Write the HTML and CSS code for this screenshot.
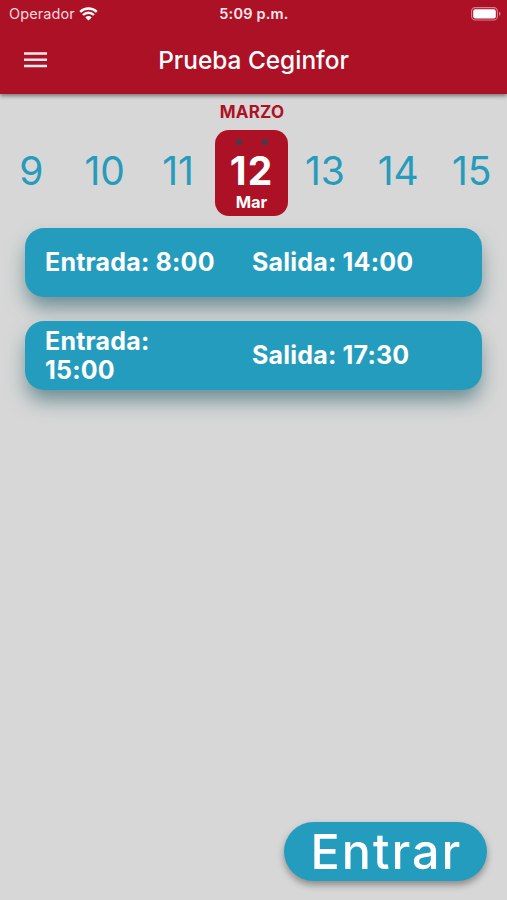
FILE: index.html
```html
<!DOCTYPE html>
<html lang="es">
<head>
    <meta charset="UTF-8">
    <meta name="viewport" content="width=device-width, initial-scale=1.0">
    <title>Prueba Ceginfor</title>
    <link rel="stylesheet" href="styles.css">
</head>
<body>
    <header class="header">
        <div class="status">
            <div class="carrier">
                <span>Operador</span>
                <svg class="wifi" width="19" height="14" viewBox="0 0 19 14">
                    <path d="M1.2 4.9a11.8 11.8 0 0 1 16.6 0M4 8a7.8 7.8 0 0 1 11 0" fill="none" stroke="#fff" stroke-width="2.4"/>
                    <path d="M9.5 13.6L6.3 10.4a4.6 4.6 0 0 1 6.4 0z" fill="#fff"/>
                </svg>
            </div>
            <div class="time">5:09 p.m.</div>
            <svg class="battery" width="30" height="14" viewBox="0 0 30 14">
                <rect x=".6" y=".6" width="25.8" height="12.4" rx="3.6" fill="none" stroke="#d9808f" stroke-width="1.1"/>
                <rect x="2.2" y="2.2" width="22.6" height="9.2" rx="2" fill="#fff"/>
                <path d="M28 4.8c2 .7 2 3.3 0 4z" fill="#d9808f"/>
            </svg>
        </div>
        <div class="toolbar">
            <button class="menu" aria-label="Menú">
                <svg width="23" height="16" viewBox="0 0 23 16">
                    <path d="M0 1.4h23M0 7.7h23M0 14h23" stroke="#fbe9ec" stroke-width="2.5"/>
                </svg>
            </button>
            <h1>Prueba Ceginfor</h1>
        </div>
    </header>
    <main>
        <div class="month">MARZO</div>
        <div class="days">
            <div class="day">9</div>
            <div class="day">10</div>
            <div class="day">11</div>
            <div class="day selected">
                <div class="rings"><i></i><i></i></div>
                <b>12</b>
                <small>Mar</small>
            </div>
            <div class="day">13</div>
            <div class="day">14</div>
            <div class="day">15</div>
        </div>
        <div class="cards">
            <div class="card">
                <div class="entry">Entrada: 8:00</div>
                <div class="exit">Salida: 14:00</div>
            </div>
            <div class="card">
                <div class="entry">Entrada: 15:00</div>
                <div class="exit">Salida: 17:30</div>
            </div>
        </div>
    </main>
    <footer class="footer">
        <button class="enter">Entrar</button>
    </footer>
</body>
</html>
```
FILE: styles.css
```css
* {
    box-sizing: border-box;
}
body {
    font-family: Inter, sans-serif;
    margin: 0;
    height: 900px;
    display: flex;
    flex-direction: column;
    overflow: hidden;
    background-color: #d7d7d7;
}
button {
    border: none;
    padding: 0;
    background: none;
    font-family: inherit;
    cursor: pointer;
}
svg {
    display: block;
}
.header {
    height: 94px;
    background-color: #ad1126;
    color: white;
    box-shadow: 0 2px 4px rgba(0, 0, 0, 0.45);
}
.status {
    display: grid;
    grid-template-columns: 1fr auto 1fr;
    align-items: center;
    height: 27px;
    padding: 0 6px 0 9px;
}
.carrier {
    display: flex;
    align-items: center;
    gap: 4px;
    font-size: 14.5px;
    letter-spacing: 0.1px;
    color: #f8d9de;
}
.time {
    margin-right: 2px;
    font-size: 14.5px;
    font-weight: 600;
    letter-spacing: 0.2px;
    color: #fbe9ec;
}
.battery {
    justify-self: end;
}
.toolbar {
    display: grid;
    grid-template-columns: 47px 1fr 47px;
    align-items: center;
    height: 66px;
}
.menu {
    padding-left: 24px;
}
h1 {
    margin: 0;
    font-size: 24.4px;
    font-weight: 500;
    line-height: 30px;
    text-align: center;
}
main {
    flex: 1;
}
.month {
    padding: 9px 3px 0 0;
    font-size: 17px;
    font-weight: 700;
    line-height: 18px;
    letter-spacing: 0.2px;
    text-align: center;
    color: #ad1126;
}
.days {
    display: grid;
    grid-template-columns: repeat(7, 73.4px);
    justify-content: center;
    margin: 9px 4px 0 0;
    height: 86px;
}
.day {
    display: flex;
    align-items: center;
    justify-content: center;
    font-size: 39px;
    padding-bottom: 5px;
    color: #269bbb;
}
.selected {
    flex-direction: column;
    justify-content: flex-start;
    padding: 9px 0 0;
    border-radius: 14px;
    background-color: #ad1126;
    color: white;
}
.rings {
    display: flex;
    gap: 20px;
}
.rings i {
    width: 6px;
    height: 6px;
    border-radius: 2px;
    background-color: #483a48;
}
.selected b {
    margin-top: 8px;
    font-size: 39px;
    line-height: 36px;
    letter-spacing: 1px;
}
.selected small {
    margin-top: 3px;
    font-size: 16.5px;
    font-weight: 700;
    line-height: 20px;
}
.cards {
    display: flex;
    flex-direction: column;
    gap: 24px;
    padding: 12px 25px 0;
}
.card {
    display: grid;
    grid-template-columns: 207px 1fr;
    align-items: center;
    height: 69px;
    padding: 0 20px;
    border-radius: 19px;
    background-color: #249cbd;
    box-shadow: 0 12px 20px -2px rgba(30, 90, 100, 0.6);
    color: white;
    font-size: 25px;
    font-weight: 700;
    line-height: 29px;
    letter-spacing: 0.2px;
}
.entry {
    padding-right: 32px;
}
.footer {
    display: flex;
    justify-content: flex-end;
    padding: 0 20px 19px 0;
}
.enter {
    width: 203px;
    height: 59px;
    padding-left: 2px;
    border-radius: 30px;
    background-color: #249cbd;
    box-shadow: 0 4px 7px rgba(0, 0, 0, 0.35);
    color: white;
    font-size: 48.5px;
    font-weight: 500;
    line-height: 58px;
    letter-spacing: 2px;
}
```
